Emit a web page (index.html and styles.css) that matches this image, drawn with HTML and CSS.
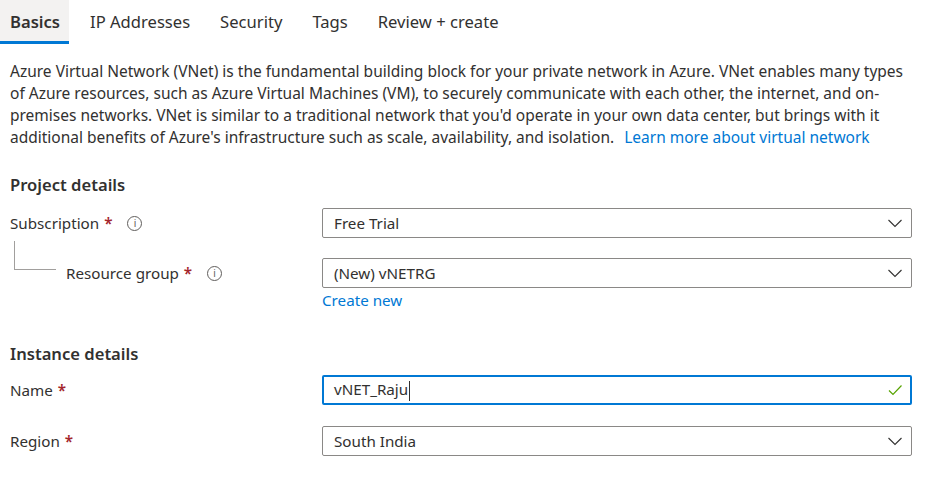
FILE: index.html
```html
<!DOCTYPE html>
<html lang="en">
<head>
<meta charset="utf-8">
<title>Create virtual network</title>
<link rel="stylesheet" href="styles.css">
</head>
<body>
<nav class="tabs">
  <div class="tab active">Basics</div>
  <div class="tab">IP Addresses</div>
  <div class="tab">Security</div>
  <div class="tab">Tags</div>
  <div class="tab">Review + create</div>
</nav>
<main class="content">
  <p class="intro">Azure Virtual Network (VNet) is the fundamental building block for your private network in Azure. VNet enables many types<br>of Azure resources, such as Azure Virtual Machines (VM), to securely communicate with each other, the internet, and on-<br>premises networks. VNet is similar to a traditional network that you'd operate in your own data center, but brings with it<br>additional benefits of Azure's infrastructure such as scale, availability, and isolation. <a class="link" href="#">Learn more about virtual network</a></p>

  <h2 class="section">Project details</h2>
  <div class="row">
    <div class="label"><span>Subscription</span><span class="req">*</span><span class="info">i</span></div>
    <div class="field">
      <div class="select"><span>Free Trial</span><svg class="chev" viewBox="0 0 16 16"><path d="M1.5 5 L8 11.5 L14.5 5" fill="none" stroke="#323130" stroke-width="1.1"/></svg></div>
    </div>
  </div>
  <div class="row sub">
    <div class="label nested"><span class="tree"></span><span>Resource group</span><span class="req">*</span><span class="info">i</span></div>
    <div class="field">
      <div class="select"><span>(New) vNETRG</span><svg class="chev" viewBox="0 0 16 16"><path d="M1.5 5 L8 11.5 L14.5 5" fill="none" stroke="#323130" stroke-width="1.1"/></svg></div>
      <a class="link create" href="#">Create new</a>
    </div>
  </div>

  <h2 class="section instance">Instance details</h2>
  <div class="row name">
    <div class="label"><span>Name</span><span class="req">*</span></div>
    <div class="field">
      <div class="select focused"><span>vNET_Raju<span class="caret"></span></span><svg class="check" viewBox="0 0 16 16"><path d="M2 8.5 L6 12.5 L14.5 3.5" fill="none" stroke="#57a300" stroke-width="1.2"/></svg></div>
    </div>
  </div>
  <div class="row region">
    <div class="label"><span>Region</span><span class="req">*</span></div>
    <div class="field">
      <div class="select"><span>South India</span><svg class="chev" viewBox="0 0 16 16"><path d="M1.5 5 L8 11.5 L14.5 5" fill="none" stroke="#323130" stroke-width="1.1"/></svg></div>
    </div>
  </div>
</main>
</body>
</html>
```
FILE: styles.css
```css
* { box-sizing: border-box; }
html, body { margin: 0; padding: 0; background: #fff; }
body {
  font-family: "Noto Sans", "Open Sans", sans-serif;
  font-size: 15.2px;
  color: #323130;
  width: 937px;
  height: 492px;
  overflow: hidden;
}
.tabs {
  display: flex;
  height: 44px;
}
.tab {
  padding: 0 10px;
  margin-right: 10px;
  font-size: 16.6px;
  line-height: 44px;
  height: 44px;
  color: #323130;
}
.tab.active {
  background: #f3f2f1;
  font-weight: 600;
  border-bottom: 3px solid #0078d4;
  line-height: 44px;
  padding: 0 9px 0 10px;
  margin-right: 11px;
}
.content { padding: 0 10px; }
.intro {
  margin: 16px 0 0;
  font-size: 15.5px;
  line-height: 22px;
  width: 925px;
  white-space: nowrap;
}
.link { color: #0078d4; text-decoration: none; }
.intro .link { margin-left: 6px; }
.section {
  font-size: 16.6px;
  font-weight: 600;
  margin: 26px 0 0;
  line-height: 22px;
}
.row {
  display: flex;
  align-items: flex-start;
  margin-top: 12px;
}
.row.sub { margin-top: 20px; }
.label {
  width: 312px;
  display: flex;
  align-items: center;
  height: 30px;
}
.label.nested { position: relative; padding-left: 56px; }
.tree {
  position: absolute;
  left: 4px;
  top: -17px;
  width: 42px;
  height: 29px;
  border-left: 1px solid #a19f9d;
  border-bottom: 1px solid #a19f9d;
}
.req { color: #a4262c; margin-left: 5px; font-weight: 600; }
.info {
  display: inline-flex;
  align-items: center;
  justify-content: center;
  width: 15px;
  height: 15px;
  border: 1px solid #605e5c;
  border-radius: 50%;
  font-size: 10px;
  line-height: 1;
  margin-left: 15px;
  color: #605e5c;
}
.field { width: 590px; }
.select {
  height: 30px;
  border: 1px solid #8a8886;
  border-radius: 2px;
  display: flex;
  align-items: center;
  justify-content: space-between;
  padding: 0 8px 0 11px;
}
.select.focused {
  border: 2px solid #0078d4;
  padding: 0 7px 0 10px;
}
.caret {
  display: inline-block;
  width: 1px;
  height: 20px;
  background: #323130;
  vertical-align: middle;
  margin-left: 1px;
}
.chev { width: 16px; height: 16px; }
.check { width: 16px; height: 16px; }
.create { display: block; margin-top: 2px; line-height: 20px; }
.section.instance { margin-top: 33px; }
.row.name { margin-top: 10px; }
.row.region { margin-top: 21px; }
```
